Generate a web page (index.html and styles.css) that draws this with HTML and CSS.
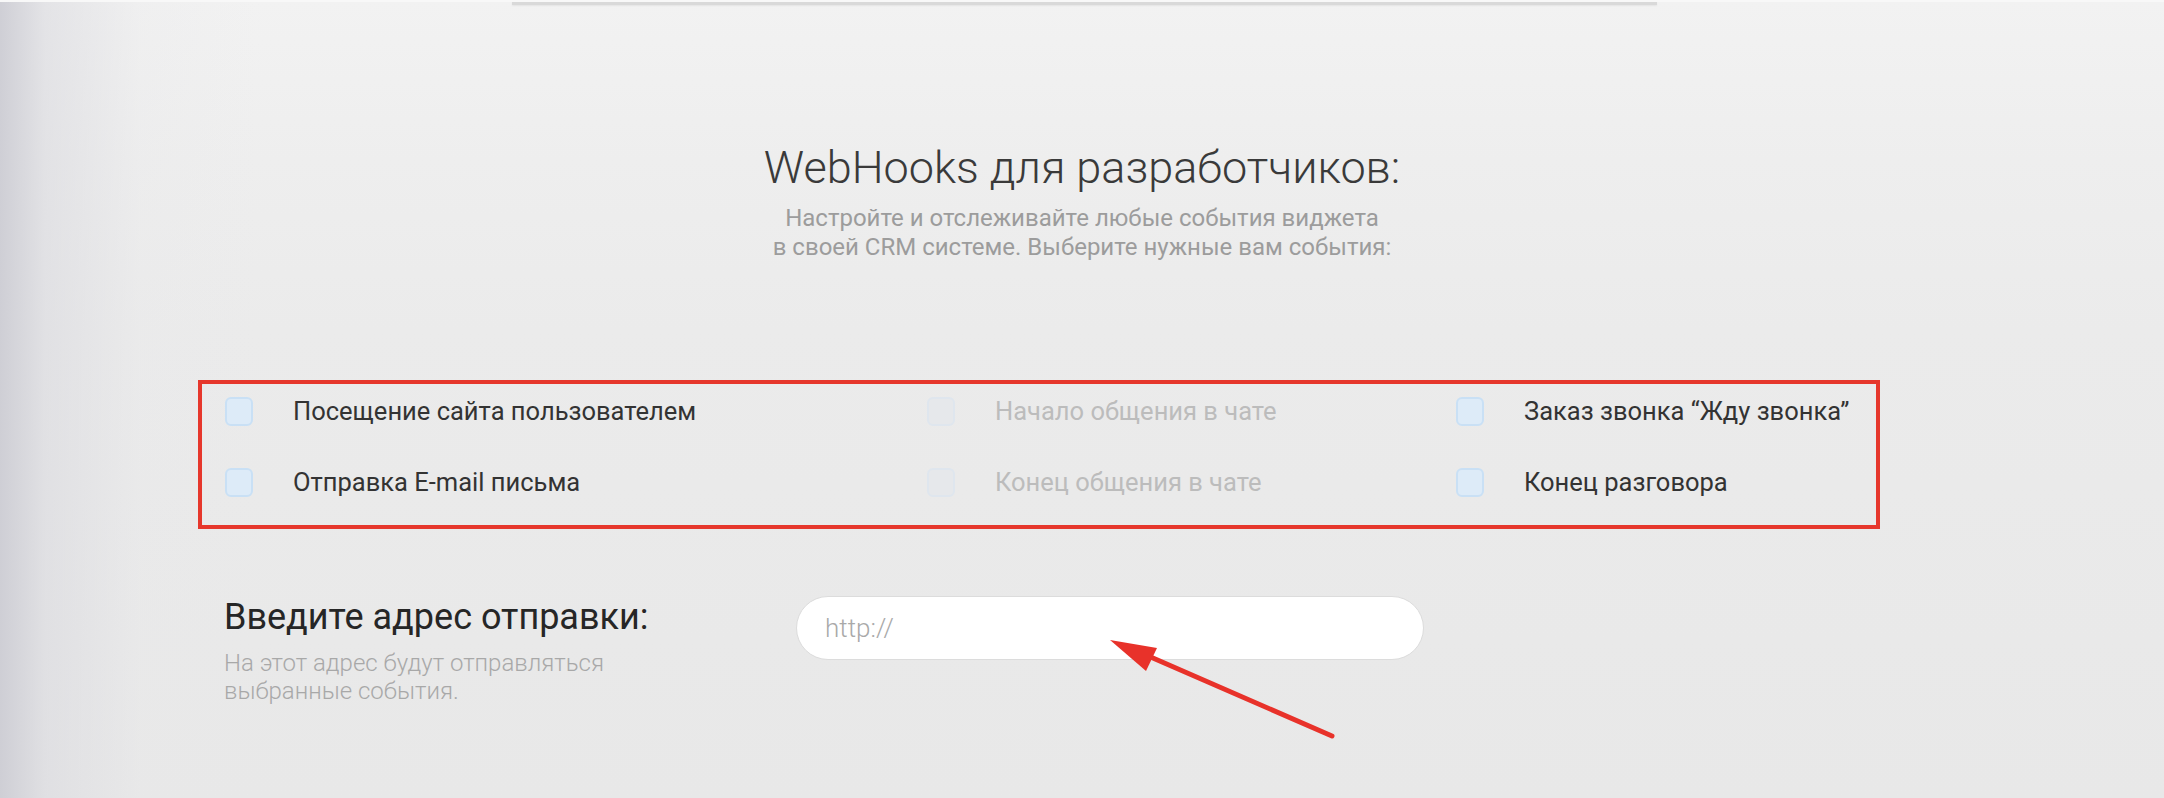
FILE: index.html
```html
<!DOCTYPE html>
<html lang="ru">
<head>
<meta charset="utf-8">
<title>WebHooks</title>
<link rel="stylesheet" href="styles.css">
</head>
<body>
<div class="page">
  <div class="top-edge"></div>
  <div class="top-card"></div>

  <header class="intro">
    <h1 class="intro-title">WebHooks для разработчиков:</h1>
    <p class="intro-text">Настройте и отслеживайте любые события виджета<br>в своей CRM системе. Выберите нужные вам события:</p>
  </header>

  <section class="events">
    <label class="event"><span class="check"></span><span class="event-label">Посещение сайта пользователем</span></label>
    <label class="event is-disabled"><span class="check"></span><span class="event-label">Начало общения в чате</span></label>
    <label class="event"><span class="check"></span><span class="event-label">Заказ звонка “Жду звонка”</span></label>
    <label class="event"><span class="check"></span><span class="event-label">Отправка E-mail письма</span></label>
    <label class="event is-disabled"><span class="check"></span><span class="event-label">Конец общения в чате</span></label>
    <label class="event"><span class="check"></span><span class="event-label">Конец разговора</span></label>
  </section>

  <section class="address">
    <div class="address-info">
      <h2 class="address-title">Введите адрес отправки:</h2>
      <p class="address-text">На этот адрес будут отправляться<br>выбранные события.</p>
    </div>
    <input class="address-input" type="text" placeholder="http://">
  </section>

  <svg class="annotation" width="2164" height="798" viewBox="0 0 2164 798">
    <line x1="1332" y1="736" x2="1146" y2="655" stroke="#e8322a" stroke-width="5" stroke-linecap="round"/>
    <polygon points="1110,640 1157,648 1146,671" fill="#e8322a"/>
  </svg>
</div>
</body>
</html>
```

FILE: styles.css
```css
* { box-sizing: border-box; }

html, body {
  margin: 0;
  padding: 0;
}

body {
  font-family: Roboto, "Noto Sans", "Liberation Sans", sans-serif;
  background: #e9e9e9;
}

.page {
  position: relative;
  width: 2164px;
  height: 798px;
  overflow: hidden;
  background:
    linear-gradient(to right, rgba(205,205,212,0.95) 0, rgba(218,218,223,0.6) 45px, rgba(232,232,234,0.25) 140px, rgba(236,236,236,0) 260px),
    linear-gradient(to bottom, #f2f2f2 0, #eeeeee 160px, #ebebeb 330px, #e8e8e8 100%);
}

.top-edge {
  height: 2px;
  background: #f8f8f8;
}

.top-card {
  margin-left: 512px;
  width: 1145px;
  height: 3px;
  background: #d9d9d9;
  box-shadow: 0 1px 2px rgba(0,0,0,0.06);
}

.intro {
  margin-top: 136px;
  text-align: center;
}

.intro-title {
  margin: 0;
  font-size: 45px;
  line-height: 54px;
  font-weight: 300;
  color: #3a3a3a;
}

.intro-text {
  margin: 9px 0 0;
  font-size: 24px;
  line-height: 29px;
  font-weight: 400;
  color: #9c9c9c;
}

.events {
  margin: 118px 0 0 198px;
  width: 1682px;
  border: 4px solid #e6372c;
  padding: 13px 0 28px 23px;
  display: grid;
  grid-template-columns: 702px 529px 1fr;
  grid-auto-rows: 29px;
  row-gap: 42px;
}

.event {
  display: flex;
  align-items: center;
  gap: 40px;
}

.check {
  flex: none;
  width: 28px;
  height: 29px;
  border-radius: 6px;
  background: #ddebf8;
  border: 2px solid #c9e0f5;
}

.event-label {
  font-size: 25.5px;
  line-height: 29px;
  color: #333333;
}

.is-disabled .check {
  background: #e6e8eb;
  border-color: #dfe6ee;
}

.is-disabled .event-label {
  color: #bcbcbc;
}

.address {
  margin: 67px 0 0 224px;
  display: flex;
  align-items: flex-start;
}

.address-info {
  width: 572px;
  margin-top: 1px;
}

.address-title {
  margin: 0;
  font-size: 36px;
  line-height: 40px;
  font-weight: 400;
  color: #262626;
}

.address-text {
  margin: 12px 0 0;
  font-size: 24px;
  line-height: 28px;
  font-weight: 300;
  color: #a8a8a8;
}

.address-input {
  width: 628px;
  height: 64px;
  border-radius: 32px;
  border: 1px solid #dcdcdc;
  background: #ffffff;
  padding: 0 28px;
  font-family: inherit;
  font-size: 26px;
  color: #555555;
  outline: none;
}

.address-input::placeholder {
  color: #a9a9a9;
  font-weight: 300;
}

.annotation {
  position: absolute;
  left: 0;
  top: 0;
  pointer-events: none;
}
```
